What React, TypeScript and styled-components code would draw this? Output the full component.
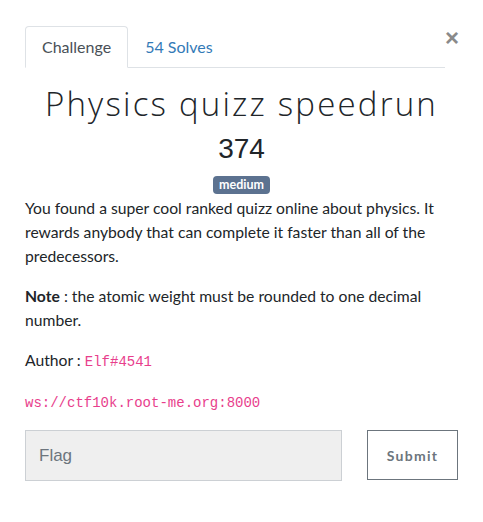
import React from "react";
import styled, { createGlobalStyle } from "styled-components";

const Global = createGlobalStyle`
  html, body { margin: 0; padding: 0; background: #fff; }
  body { font-family: Lato, "Open Sans", sans-serif; color: #212529; }
  * { box-sizing: border-box; }
`;

const Modal = styled.div`
  position: relative;
  width: 483px;
  height: 522px;
  padding: 26px 0 0 25px;
`;

const Close = styled.button`
  position: absolute;
  top: 26px;
  left: 445px;
  border: 0;
  background: transparent;
  padding: 0;
  font-family: "Liberation Sans", Arial, sans-serif;
  font-size: 24px;
  font-weight: 700;
  line-height: 24px;
  color: #8a8a8a;
  cursor: pointer;
`;

const Tabs = styled.ul`
  display: flex;
  width: 420px;
  margin: 0;
  padding: 0;
  list-style: none;
  border-bottom: 1px solid #dee2e6;
`;

const Tab = styled.li<{ $active?: boolean }>`
  margin-bottom: -1px;
  padding: 8px 16px;
  font-size: 16px;
  line-height: 24px;
  border: 1px solid ${(p) => (p.$active ? "#dee2e6" : "transparent")};
  border-bottom-color: ${(p) => (p.$active ? "#fff" : "transparent")};
  border-radius: 4px 4px 0 0;
  color: ${(p) => (p.$active ? "#495057" : "#337ab7")};
  background: ${(p) => (p.$active ? "#fff" : "transparent")};
`;

const Content = styled.div`
  width: 433px;
  text-align: left;
`;

const Title = styled.h2`
  margin: 16px 0 0;
  text-align: center;
  font-family: "Open Sans", sans-serif;
  font-weight: 300;
  font-size: 33px;
  line-height: 40px;
  letter-spacing: 2.2px;
  color: #212529;
`;

const Points = styled.h3`
  margin: 8px 0 0;
  text-align: center;
  font-family: "Liberation Sans", Arial, sans-serif;
  font-weight: 400;
  font-size: 28px;
  line-height: 34px;
  color: #212529;
`;

const BadgeRow = styled.div`
  display: flex;
  justify-content: center;
  margin-top: 10px;
`;

const Badge = styled.span`
  display: inline-block;
  padding: 2px 6px;
  border-radius: 4px;
  background: #5c7290;
  color: #fff;
  font-size: 12.5px;
  font-weight: 700;
  line-height: 14px;
`;

const Paragraph = styled.p`
  margin: 0 0 16px;
  font-size: 15.7px;
  line-height: 24px;
  color: #212529;
`;

const CodeParagraph = styled(Paragraph)`
  margin-top: -1px;
  margin-bottom: 15px;
`;

const Description = styled.div`
  margin-top: 2px;
  width: 420px;
`;

const Code = styled.code`
  font-family: "Liberation Mono", "Courier New", monospace;
  font-size: 14px;
  color: #e83e8c;
`;

const Form = styled.form`
  display: flex;
  width: 433px;
  gap: 25px;
  margin: 0;
`;

const Input = styled.input`
  width: 317px;
  height: 51px;
  padding: 0 13px;
  background: #efefef;
  border: 1px solid #ccd0d4;
  font-family: "Liberation Sans", Arial, sans-serif;
  font-size: 17px;
  color: #495057;
  outline: none;
  &::placeholder { color: #6c757d; }
`;

const Submit = styled.button`
  width: 91px;
  height: 50px;
  background: #fff;
  border: 1.5px solid #6c757d;
  font-family: Lato, sans-serif;
  font-size: 14px;
  font-weight: 700;
  letter-spacing: 1.3px;
  color: #6c757d;
`;

export default function App() {
  return (
    <>
      <Global />
      <Modal>
        <Close aria-label="Close">×</Close>
        <Tabs>
          <Tab $active>Challenge</Tab>
          <Tab>54 Solves</Tab>
        </Tabs>
        <Content>
          <Title>Physics quizz speedrun</Title>
          <Points>374</Points>
          <BadgeRow>
            <Badge>medium</Badge>
          </BadgeRow>
          <Description>
            <Paragraph>
              You found a super cool ranked quizz online about physics. It rewards anybody that can complete it faster than all of the predecessors.
            </Paragraph>
            <Paragraph>
              <strong>Note</strong> : the atomic weight must be rounded to one decimal number.
            </Paragraph>
            <Paragraph>
              Author : <Code>Elf#4541</Code>
            </Paragraph>
            <CodeParagraph>
              <Code>ws://ctf10k.root-me.org:8000</Code>
            </CodeParagraph>
          </Description>
        </Content>
        <Form onSubmit={(e) => e.preventDefault()}>
          <Input placeholder="Flag" />
          <Submit type="submit">Submit</Submit>
        </Form>
      </Modal>
    </>
  );
}
